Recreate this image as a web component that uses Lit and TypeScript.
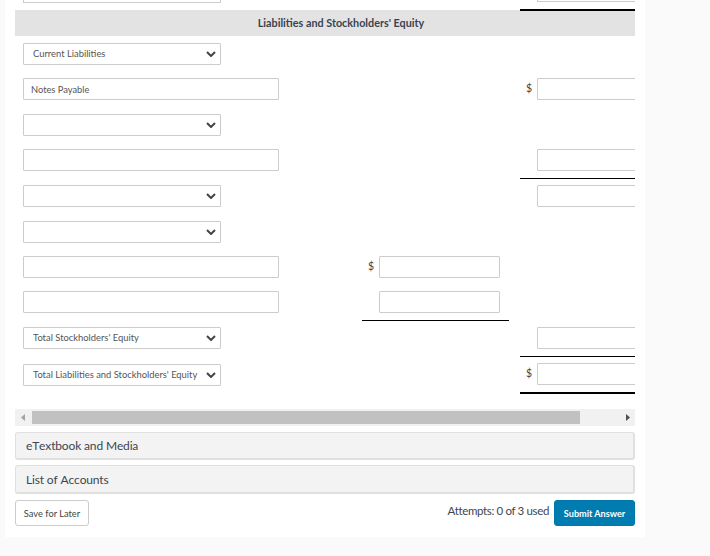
import { LitElement, html, css, nothing } from 'lit';
import { customElement } from 'lit/decorators.js';

type Row = {
  pitch: number;
  label: 'select' | 'input';
  text?: string;
  mid?: boolean;
  midDollar?: boolean;
  midRule?: boolean;
  right?: boolean;
  rightDollar?: boolean;
  rule?: '' | 'thin' | 'thick';
  nudge?: boolean;
};

const ROWS: Row[] = [
  { pitch: 35, label: 'select', text: 'Current Liabilities' },
  { pitch: 36, label: 'input', text: 'Notes Payable', right: true, rightDollar: true },
  { pitch: 35, label: 'select' },
  { pitch: 36, label: 'input', right: true, rule: 'thin' },
  { pitch: 36, label: 'select', right: true },
  { pitch: 35, label: 'select' },
  { pitch: 35, label: 'input', mid: true, midDollar: true },
  { pitch: 36, label: 'input', mid: true, midRule: true },
  { pitch: 36, label: 'select', text: "Total Stockholders' Equity", right: true, rule: 'thin' },
  { pitch: 46, label: 'select', text: "Total Liabilities and Stockholders' Equity", right: true, rightDollar: true, rule: 'thick', nudge: true },
];

@customElement('app-root')
export class AppRoot extends LitElement {
  static styles = css`
    :host {
      display: block;
      min-height: 556px;
      background: #fafafa;
      font-family: Lato, 'Liberation Sans', sans-serif;
      color: #333;
    }
    .card {
      box-sizing: border-box;
      width: 640px;
      height: 537px;
      margin-left: 5px;
      padding: 0 10px;
      background: #fff;
      overflow: hidden;
    }
    .row {
      display: grid;
      grid-template-columns: 347px 147px 11px 115px;
      align-items: start;
    }
    .top {
      position: relative;
      height: 9px;
      z-index: 1;
    }
    .top .stub {
      box-sizing: border-box;
      height: 3px;
      width: 198px;
      margin-left: 8px;
      border: 1px solid #ccc;
      border-top: none;
    }
    .top .cell {
      grid-column: 4;
      box-sizing: border-box;
      height: 11px;
      border-bottom: 2px solid #000;
    }
    .top .cell div {
      box-sizing: border-box;
      height: 2px;
      margin-left: 17px;
      border-bottom: 1px solid #ccc;
      border-left: 1px solid #ccc;
    }
    .band {
      margin-top: 1px;
      height: 26px;
      margin-bottom: 7px;
      padding-left: 32px;
      background: #e3e3e3;
      text-align: center;
      font-size: 10.8px;
      font-weight: 700;
      line-height: 26px;
      color: #3a4450;
    }
    .label {
      padding-left: 8px;
    }
    .nudge {
      padding-top: 1px;
    }
    .select {
      position: relative;
      width: 198px;
      height: 22px;
    }
    select {
      appearance: none;
      box-sizing: border-box;
      display: block;
      width: 100%;
      height: 22px;
      margin: 0;
      padding: 0 20px 1px 9px;
      border: 1px solid #ccc;
      border-radius: 1px;
      background: #fff;
      font: 9.4px Lato, 'Liberation Sans', sans-serif;
      color: #555;
    }
    .chev {
      position: absolute;
      top: 8px;
      right: 5px;
      width: 10px;
      height: 6px;
      pointer-events: none;
    }
    input {
      box-sizing: border-box;
      display: block;
      height: 22px;
      margin: 0;
      padding: 0 7px;
      border: 1px solid #ccc;
      border-radius: 1px;
      background: #fff;
      font: 9.3px Lato, 'Liberation Sans', sans-serif;
      color: #555;
    }
    .wide {
      width: 256px;
    }
    .amount {
      display: flex;
      overflow: hidden;
    }
    .amount input {
      flex: none;
      width: 121px;
    }
    .right {
      grid-column: 4;
    }
    .right input {
      width: 120px;
    }
    .mid {
      grid-column: 2;
      grid-row: 1;
      padding-bottom: 7px;
    }
    .mid.rule {
      border-bottom: 1px solid #000;
    }
    .right.thin {
      padding-bottom: 7px;
      border-bottom: 1px solid #000;
    }
    .right.thick {
      padding-bottom: 7px;
      border-bottom: 2px solid #000;
    }
    .cur {
      flex: none;
      box-sizing: border-box;
      width: 17px;
      padding-left: 6px;
      font-size: 10.5px;
      line-height: 20px;
      color: #444;
    }
    .bar {
      display: flex;
      align-items: center;
      height: 17px;
      background: #f1f1f1;
    }
    .bar .arrow {
      flex: none;
      width: 17px;
      height: 17px;
    }
    .bar .thumb {
      width: 548px;
      height: 13px;
      background: #c1c1c1;
    }
    .bar .rest {
      flex: 1;
    }
    .panel {
      box-sizing: border-box;
      display: flex;
      align-items: center;
      margin-top: 6px;
      height: 28px;
      padding: 0 10px;
      border: 1px solid #e0e0e0;
      border-bottom-width: 2px;
      border-right-width: 2px;
      border-radius: 3px;
      background: #f3f3f3;
      font-size: 12px;
      font-kerning: none;
      letter-spacing: -0.15px;
      color: #3d4650;
    }
    .panel + .panel {
      margin-top: 5px;
      height: 29px;
    }
    .foot {
      display: flex;
      align-items: flex-start;
      gap: 5px;
      margin-top: 6px;
    }
    .attempts {
      margin-left: auto;
      font-size: 11.5px;
      letter-spacing: -0.35px;
      line-height: 22px;
      color: #3d4650;
    }
    button {
      box-sizing: border-box;
      height: 26px;
      margin: 0;
      border-radius: 3px;
      font: 9.3px Lato, 'Liberation Sans', sans-serif;
    }
    .save {
      width: 74px;
      padding: 0;
      border: 1px solid #ccc;
      background: #fff;
      color: #444;
    }
    .submit {
      width: 81px;
      padding: 0;
      border: 1px solid #0077a8;
      background: #007cb0;
      color: #fff;
      font-size: 9.1px;
      font-weight: 700;
    }
  `;

  private _renderRow(r: Row) {
    return html`
      <div class="row" style="height:${r.pitch}px">
        <div class="label ${r.nudge ? 'nudge' : ''}">
          ${r.label === 'select'
            ? html`<div class="select">
                <select>
                  <option>${r.text ?? ''}</option>
                </select>
                <svg class="chev" viewBox="0 0 10 6">
                  <path d="M1 1l4 4 4-4" fill="none" stroke="#444" stroke-width="2" />
                </svg>
              </div>`
            : html`<input class="wide" type="text" .value=${r.text ?? ''} />`}
        </div>
        ${r.mid
          ? html`<div class="mid ${r.midRule ? 'rule' : ''}">
              <div class="amount">
                <span class="cur">${r.midDollar ? '$' : ''}</span>
                <input type="text" />
              </div>
            </div>`
          : nothing}
        ${r.right
          ? html`<div class="right ${r.rule ?? ''}">
              <div class="amount">
                <span class="cur">${r.rightDollar ? '$' : ''}</span>
                <input type="text" />
              </div>
            </div>`
          : nothing}
      </div>
    `;
  }

  protected render() {
    return html`
      <div class="card">
        <div class="row top">
          <div class="stub"></div>
          <div class="cell"><div></div></div>
        </div>
        <div class="band">Liabilities and Stockholders' Equity</div>
        ${ROWS.map((r) => this._renderRow(r))}
        <div class="bar">
          <svg class="arrow" viewBox="0 0 17 17"><path d="M10 5v7l-4-3.500z" fill="#a3a3a3" /></svg>
          <div class="thumb"></div>
          <div class="rest"></div>
          <svg class="arrow" viewBox="0 0 17 17"><path d="M8 5v7l4-3.500z" fill="#505050" /></svg>
        </div>
        <div class="panel">eTextbook and Media</div>
        <div class="panel">List of Accounts</div>
        <div class="foot">
          <button class="save">Save for Later</button>
          <span class="attempts">Attempts: 0 of 3 used</span>
          <button class="submit">Submit Answer</button>
        </div>
      </div>
    `;
  }
}
